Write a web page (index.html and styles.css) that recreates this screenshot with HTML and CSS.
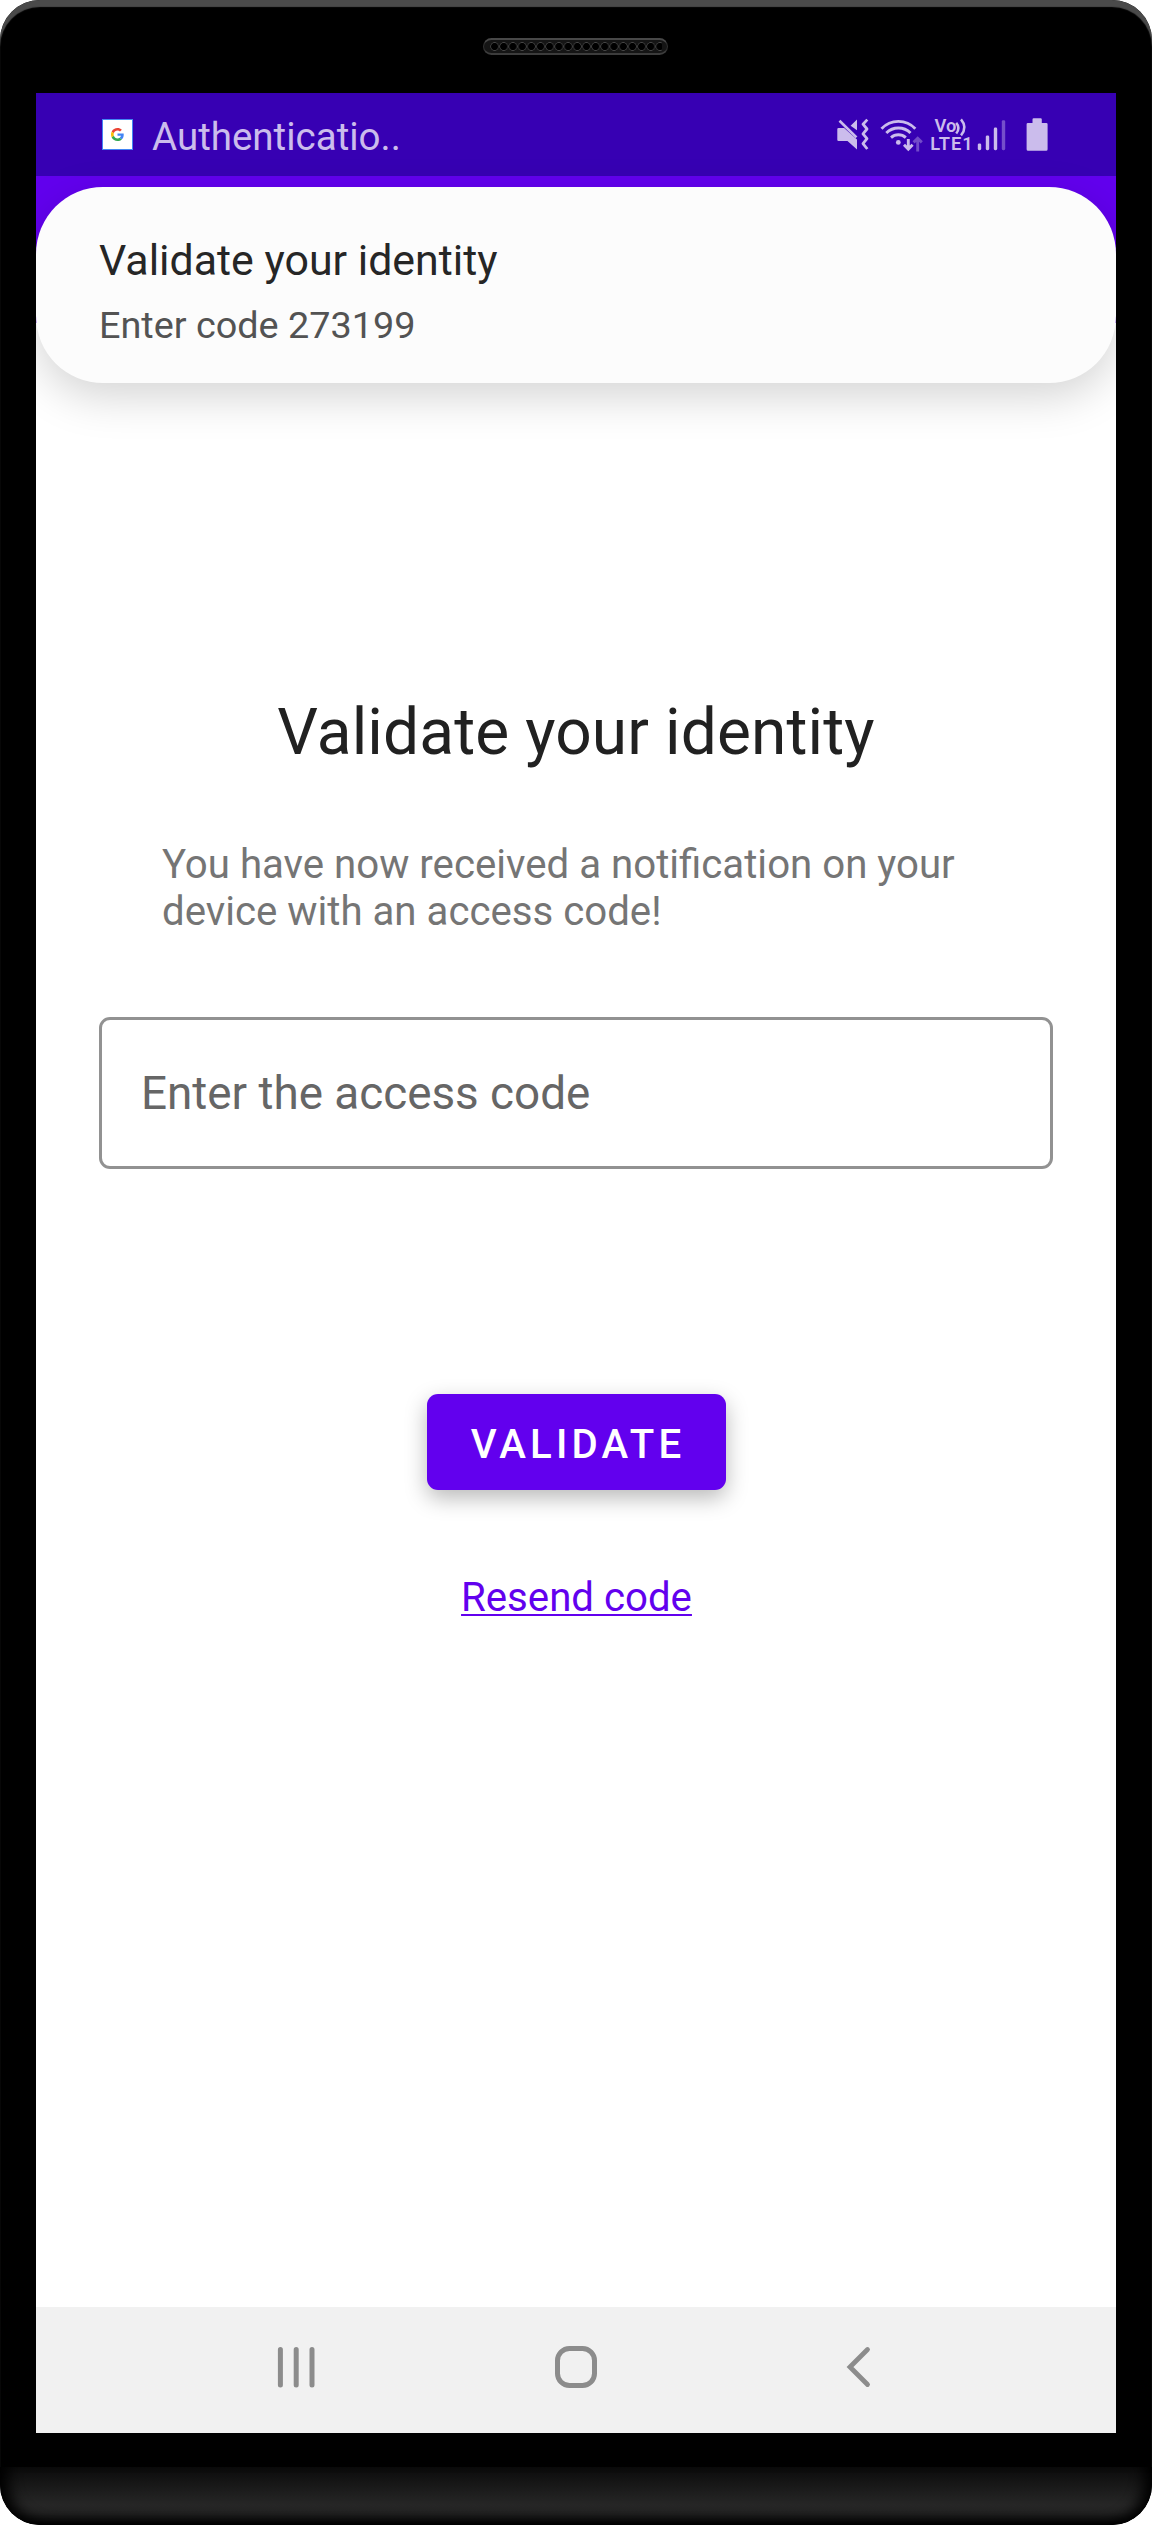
FILE: index.html
```html
<!DOCTYPE html>
<html lang="en">
<head>
<meta charset="utf-8">
<title>Validate your identity</title>
<link rel="stylesheet" href="styles.css">
</head>
<body>
<div class="phone">
  <div class="bezel-top"><div class="speaker"><div class="speaker-holes"></div></div></div>
  <div class="screen">
    <header class="status-bar">
      <div class="status-app">
        <span class="app-icon">
          <svg width="13" height="13" viewBox="0 0 48 48">
            <path fill="#EA4335" d="M24 9.5c3.54 0 6.71 1.22 9.21 3.6l6.85-6.85C35.9 2.38 30.47 0 24 0 14.62 0 6.51 5.38 2.56 13.22l7.98 6.19C12.43 13.72 17.74 9.5 24 9.5z"/>
            <path fill="#4285F4" d="M46.98 24.55c0-1.57-.15-3.09-.38-4.55H24v9.02h12.94c-.58 2.96-2.26 5.48-4.78 7.18l7.73 6c4.51-4.18 7.09-10.36 7.09-17.65z"/>
            <path fill="#FBBC05" d="M10.53 28.59c-.48-1.45-.76-2.99-.76-4.59s.27-3.14.76-4.59l-7.98-6.19C.92 16.46 0 20.12 0 24s.92 7.54 2.56 10.78l7.97-6.19z"/>
            <path fill="#34A853" d="M24 48c6.48 0 11.93-2.13 15.89-5.81l-7.73-6c-2.15 1.45-4.92 2.3-8.16 2.3-6.26 0-11.57-4.22-13.47-9.91l-7.98 6.19C6.51 42.62 14.62 48 24 48z"/>
          </svg>
        </span>
        <span class="app-name">Authenticatio..</span>
      </div>
      <div class="status-icons">
        <svg class="icon-mute" width="34" height="36" viewBox="836 117 34 36">
          <path fill="currentColor" d="M838.5 128h5.6L857 139.6v9.9L847.5 141h-9a1.2 1.2 0 0 1-1.2-1.2v-10.6a1.2 1.2 0 0 1 1.2-1.2zM850.6 125.8l6.4-6.2v10.6z"/>
          <path stroke="currentColor" stroke-width="2.6" fill="none" d="M839.5 120.8l17 16.6"/>
          <path stroke="currentColor" stroke-width="2.8" fill="none" stroke-linejoin="round" d="M867.3 119.6l-4.3 4.6 4 4.8-4 4.8 4 4.8-4 5 4.3 5.4"/>
        </svg>
        <svg class="icon-wifi" width="44" height="36" viewBox="880 117 44 36">
          <g fill="none" stroke="currentColor" stroke-width="2.9">
            <path d="M881.5 128.8a23 23 0 0 1 33.8 0"/>
            <path d="M886.3 133a17.2 17.2 0 0 1 24.2 0"/>
            <path d="M891 137.6a11 11 0 0 1 14.8 0"/>
            <path d="M908.3 139v10M904 144.8l4.3 4.3 4.3-4.3"/>
            <path opacity=".4" d="M917.7 151.500v-13M913.6 142.400l4.1-4.1 4.1 4.1"/>
          </g>
          <circle cx="898.3" cy="142.4" r="2.4" fill="currentColor"/>
        </svg>
        <svg class="icon-volte" width="42" height="36" viewBox="930 117 42 36">
          <text x="934.6" y="132.4" class="volte-text">Vo</text>
          <text x="930.2" y="149.9" class="volte-text volte-wide">LTE1</text>
          <path fill="none" stroke="currentColor" stroke-width="2.5" d="M956.2 122.8q4.4 5 0 10.8M961 119.4q6.8 8 0 16"/>
        </svg>
        <svg class="icon-signal" width="30" height="36" viewBox="976 117 30 36">
          <g fill="currentColor">
            <rect x="977.8" y="143.4" width="3.4" height="6.8" rx="1.4"/>
            <rect x="985.8" y="135.4" width="3.4" height="14.8" rx="1.4"/>
            <rect x="993.8" y="127.6" width="3.4" height="22.6" rx="1.4"/>
            <rect x="1001.8" y="120.2" width="3.4" height="30" rx="1.4" opacity=".42"/>
          </g>
        </svg>
        <svg class="icon-battery" width="22" height="36" viewBox="1026.500 117 22 36">
          <path fill="currentColor" d="M1033 123v-3.600a1.200 1.200 0 0 1 1.200-1.200h6.900a1.200 1.200 0 0 1 1.200 1.200v3.600h4.500a1.300 1.300 0 0 1 1.300 1.300v25a1.500 1.500 0 0 1-1.500 1.500h-18a1.500 1.500 0 0 1-1.500-1.500v-25a1.300 1.300 0 0 1 1.300-1.300z"/>
        </svg>
      </div>
    </header>
    <div class="app-bar"></div>
    <main class="content">
      <h1 class="title">Validate your identity</h1>
      <p class="message">You have now received a notification on your device with an access code!</p>
      <input class="code-field" type="text" placeholder="Enter the access code">
      <button class="validate" type="button">VALIDATE</button>
      <a class="resend" href="#">Resend code</a>
    </main>
    <nav class="nav-bar">
      <svg width="40" height="44" viewBox="0 0 40 44"><path stroke="currentColor" stroke-width="5" stroke-linecap="round" d="M4.400 4.500v35.500M20.200 4.500v35.500M36 4.500v35.500"/></svg>
      <svg class="nav-home" width="44" height="44" viewBox="0 0 44 44"><rect x="3.500" y="3.500" width="37" height="37" rx="12" fill="none" stroke="currentColor" stroke-width="5"/></svg>
      <svg width="26" height="44" viewBox="0 0 26 44"><path fill="none" stroke="currentColor" stroke-width="4.800" stroke-linecap="round" stroke-linejoin="miter" d="M22.500 4.500L5 22l17.500 17.500"/></svg>
    </nav>
    <aside class="notification">
      <div class="notification-title">Validate your identity</div>
      <div class="notification-text">Enter code 273199</div>
    </aside>
  </div>
  <div class="chin"></div>
</div>
</body>
</html>
```
FILE: styles.css
```css
* { box-sizing: border-box; }

body {
  margin: 0;
  background: #fff;
  font-family: Roboto, "Liberation Sans", sans-serif;
}

svg { display: block; flex: none; overflow: visible; }

/* Device frame */
.phone {
  display: flex;
  flex-direction: column;
  width: 1152px;
  height: 2525px;
  padding: 0 36px;
  background: #000;
  border-radius: 40px;
  box-shadow: inset 0 7px 1px #4a4a4a;
  overflow: hidden;
}

.bezel-top {
  display: flex;
  justify-content: center;
  height: 93px;
  padding: 38px 1px 0 0;
}

.speaker {
  width: 185px;
  height: 17px;
  padding: 5px 5px 3px 6px;
  background: #151515;
  border: 1px solid #303030;
  border-top: 2px solid #484848;
  border-bottom: 2px solid #3c3c3c;
  border-radius: 9px;
}

.speaker-holes {
  height: 10px;
  margin-top: -3px;
  background: radial-gradient(circle at 50% 45%, #000 0 3.2px, #484848 4px, transparent 4.600px) 0 0 / 9.200px 10px repeat-x;
}

.screen {
  position: relative;
  display: flex;
  flex-direction: column;
  height: 2340px;
  background: #fff;
  overflow: hidden;
}

.chin {
  height: 58px;
  margin: 34px -36px 0;
  border-radius: 0 0 40px 40px;
  background: linear-gradient(#0b0b0b, #262626 65%, #222 78%, #111 92%, #000);
  box-shadow: inset 14px -4px 14px -6px #000, inset -14px -4px 14px -6px #000;
}

/* Status bar */
.status-bar {
  display: flex;
  justify-content: space-between;
  align-items: flex-start;
  height: 83px;
  padding: 24px 68px 0 66px;
  background: #3700b3;
  color: #cbbcec;
}

.status-app { display: flex; gap: 19px; }

.app-icon {
  display: flex;
  align-items: center;
  justify-content: center;
  width: 31px;
  height: 31px;
  margin-top: 2px;
  background: #fff;
  border: 1px solid #4285f4;
}

.app-name { font-size: 38.500px; line-height: 40px; }

.status-icons { display: flex; }
.icon-wifi { margin-left: 10px; }
.icon-volte { margin-left: 6px; }
.icon-signal { margin-left: 4px; }
.icon-battery { margin-left: 20.500px; }

.volte-text { font-size: 18.300px; font-weight: 600; fill: currentColor; }
.volte-wide { letter-spacing: .9px; }

.app-bar { height: 147px; background: #6200ee; }

/* Heads-up notification */
.notification {
  position: absolute;
  top: 94px;
  left: 0;
  width: 1080px;
  height: 196px;
  padding: 48px 63px 0;
  background: #fcfcfc;
  border-radius: 67px;
  box-shadow: 0 14px 44px rgba(0, 0, 0, .17);
}

.notification-title { font-size: 42.900px; line-height: 50px; color: #262626; }
.notification-text { margin-top: 17px; font-size: 37.800px; line-height: 46px; color: #535353; }

/* Page content */
.content {
  flex: 1;
  display: flex;
  flex-direction: column;
  align-items: center;
  padding: 372px 63px 0;
}

.title {
  margin: 0;
  font-size: 64px;
  font-weight: 400;
  line-height: 76px;
  letter-spacing: .12px;
  color: #212121;
}

.message {
  width: 828px;
  margin: 70px 0 0;
  font-size: 40.200px;
  line-height: 47px;
  color: #757575;
}

.code-field {
  width: 954px;
  height: 152px;
  margin-top: 82px;
  padding: 0 39px;
  background: #fff;
  border: 3px solid #929292;
  border-radius: 11px;
  font: 400 45.800px Roboto, "Liberation Sans", sans-serif;
}

.code-field::placeholder { color: #666; opacity: 1; }

.validate {
  width: 299px;
  height: 96px;
  margin-top: 225px;
  padding: 4px 0 0 4px;
  border: 0;
  border-radius: 11px;
  background: #6200ee;
  box-shadow: 0 8px 22px rgba(0, 0, 0, .28);
  color: #fff;
  font: 500 40.200px Roboto, "Liberation Sans", sans-serif;
  letter-spacing: 4.150px;
}

.resend {
  margin: 84px 0 0 1px;
  font-size: 40.200px;
  line-height: 48px;
  color: #6200ee;
  text-decoration: underline 2px;
  text-underline-offset: 3px;
  text-decoration-skip-ink: none;
}

/* System navigation */
.nav-bar {
  display: flex;
  justify-content: space-between;
  align-items: center;
  height: 126px;
  padding: 0 245px 6px 240px;
  background: #f1f1f1;
  color: #8c8c8c;
}

.nav-home { margin-right: 9px; }
```
